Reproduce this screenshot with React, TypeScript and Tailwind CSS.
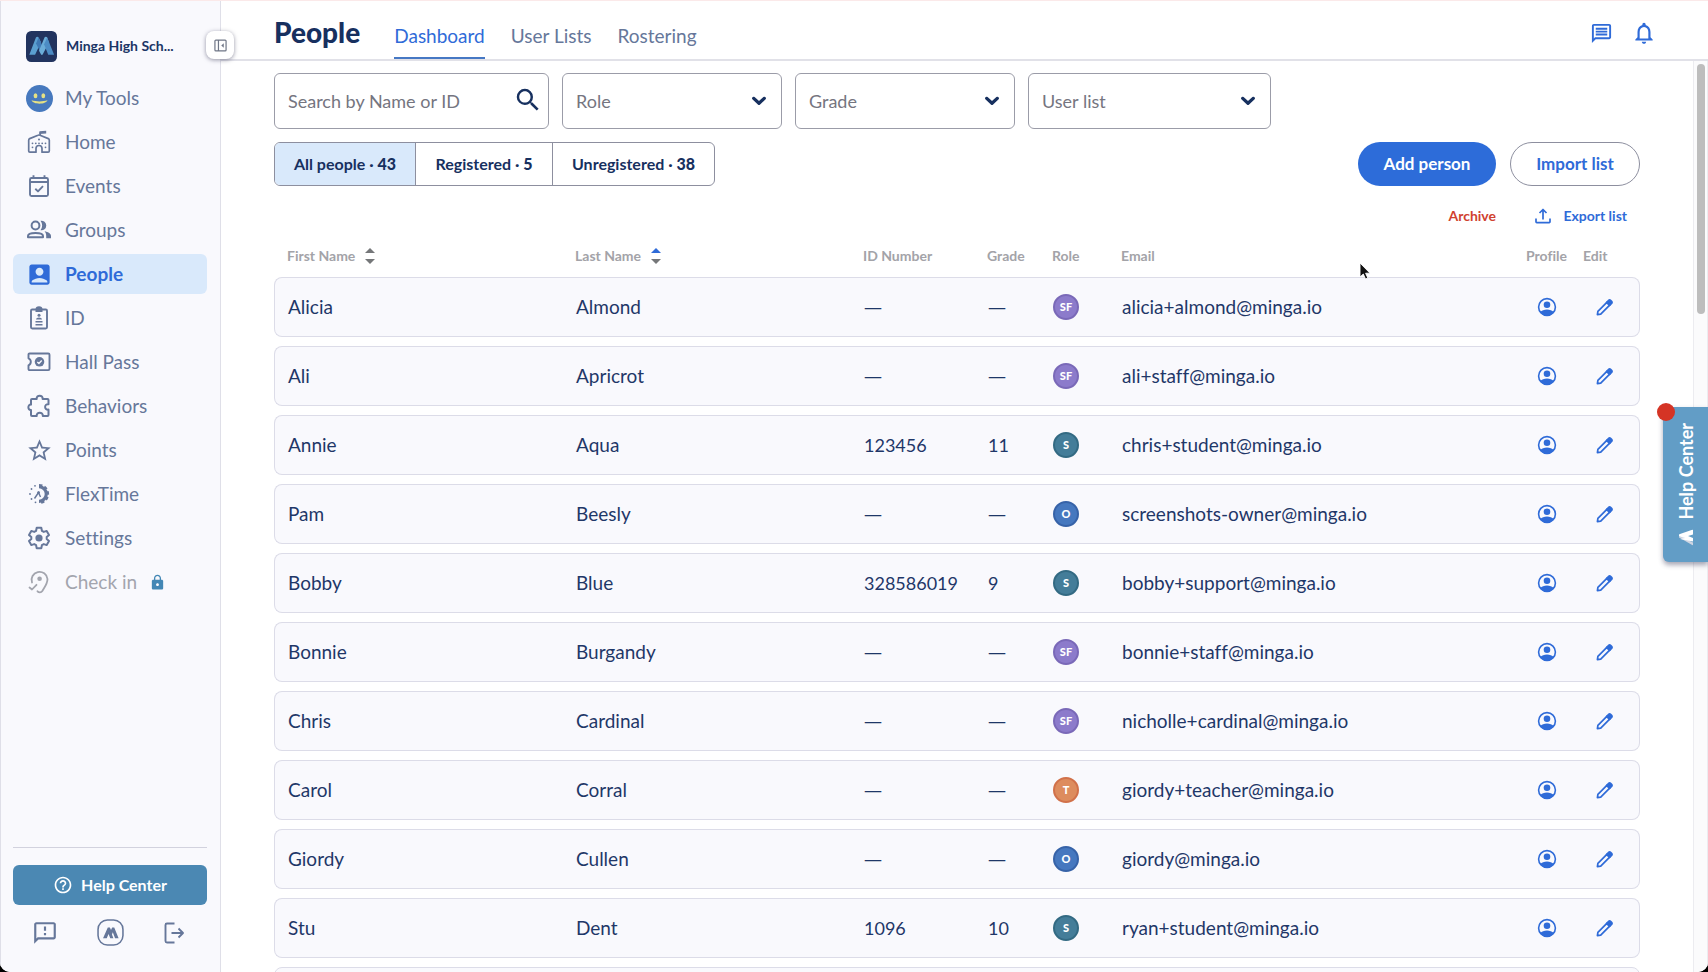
import React from 'react'
import {
  MdAccountBox,
  MdHelpOutline,
  MdLock,
  MdNotificationsNone,
  MdOutlineFeedback,
  MdOutlineMessage,
  MdSearch,
  MdStarBorder,
} from 'react-icons/md'

type RoleCode = 'SF' | 'S' | 'O' | 'T'

interface Person {
  first: string
  last: string
  id?: string
  grade?: string
  role: RoleCode
  email: string
}

const people: Person[] = [
  { first: 'Alicia', last: 'Almond', role: 'SF', email: 'alicia+almond@minga.io' },
  { first: 'Ali', last: 'Apricrot', role: 'SF', email: 'ali+staff@minga.io' },
  { first: 'Annie', last: 'Aqua', id: '123456', grade: '11', role: 'S', email: 'chris+student@minga.io' },
  { first: 'Pam', last: 'Beesly', role: 'O', email: 'screenshots-owner@minga.io' },
  { first: 'Bobby', last: 'Blue', id: '328586019', grade: '9', role: 'S', email: 'bobby+support@minga.io' },
  { first: 'Bonnie', last: 'Burgandy', role: 'SF', email: 'bonnie+staff@minga.io' },
  { first: 'Chris', last: 'Cardinal', role: 'SF', email: 'nicholle+cardinal@minga.io' },
  { first: 'Carol', last: 'Corral', role: 'T', email: 'giordy+teacher@minga.io' },
  { first: 'Giordy', last: 'Cullen', role: 'O', email: 'giordy@minga.io' },
  { first: 'Stu', last: 'Dent', id: '1096', grade: '10', role: 'S', email: 'ryan+student@minga.io' },
]

const roleColors: Record<RoleCode, string> = {
  SF: 'bg-[#8c7bcb] border-[#7a69b8]',
  S: 'bg-[#447d99] border-[#336a83]',
  O: 'bg-[#4678bf] border-[#3763a8]',
  T: 'bg-[#dd8c5e] border-[#d1714a]',
}

function SmileIcon() {
  return (
    <svg viewBox="0 0 27 27" className="size-[27px]">
      <circle cx="13.5" cy="13.5" r="13.5" fill="#4779be" />
      <ellipse cx="9.5" cy="10.8" rx="1.9" ry="2.5" fill="#e5e184" />
      <ellipse cx="17.3" cy="10.8" rx="1.9" ry="2.5" fill="#e5e184" />
      <path d="M5.500 15.300c4.500 1.500 11.500 1.500 16 0c-1.600 4.500-14.400 4.500-16 0z" fill="#e5e184" />
    </svg>
  )
}

function HomeIcon() {
  return (
    <svg viewBox="0 0 24 24" className="size-6" fill="none" stroke="currentColor" strokeWidth="1.700" strokeLinejoin="round">
      <path d="M9 22.200H2.900a1.200 1.200 0 0 1-1.200-1.200V10.200c0-.8.300-1.200 1-1.600L11 5.200a2.500 2.500 0 0 1 2 0l8.300 3.400c.7.400 1 .8 1 1.600V21a1.200 1.200 0 0 1-1.200 1.200H15v-3.700a3 3 0 0 0-6 0z" />
      <path d="M13.200 5V2.200" />
      <path d="M12.400 1.300l6.800-.6v2.800l-6.800.6z" fill="currentColor" stroke="none" />
      <g fill="currentColor" stroke="none">
        <circle cx="12" cy="9.500" r="1" />
        <circle cx="5.500" cy="13.300" r="0.900" />
        <circle cx="8.800" cy="13.300" r="0.900" />
        <circle cx="12" cy="13.300" r="0.900" />
        <circle cx="15.200" cy="13.300" r="0.900" />
        <circle cx="18.500" cy="13.300" r="0.900" />
        <circle cx="5.500" cy="17.300" r="0.900" />
        <circle cx="18.500" cy="17.300" r="0.900" />
      </g>
    </svg>
  )
}

function EventsIcon() {
  return (
    <svg viewBox="0 0 24 24" className="size-6" fill="none" stroke="currentColor" strokeWidth="1.900" strokeLinejoin="round">
      <rect x="3" y="4" width="18" height="18" rx="1.500" />
      <path d="M3 8h18" />
      <path d="M6.500 1.200V4M17.500 1.200V4" />
      <path d="M8.300 14.800l2.700 2.600 5-5.200" />
    </svg>
  )
}

function GroupsIcon() {
  return (
    <svg viewBox="0 0 26 22" className="h-[22px] w-[26px]" fill="none" stroke="currentColor" strokeWidth="2">
      <circle cx="9.500" cy="6.500" r="3.900" />
      <path d="M2 18.300v-1.200c0-4.200 15-4.200 15 0v1.200z" strokeLinejoin="round" />
      <path d="M14.500 1.800a4.800 4.800 0 1 1 0 9.400c2.200-2.800 2.200-6.600 0-9.400z" fill="currentColor" stroke="none" />
      <path d="M18.500 12.300c3.500.6 6.500 2.200 6.500 4.800v2.200h-4.800v-2.500c0-1.800-.5-3.200-1.700-4.500z" fill="currentColor" stroke="none" />
    </svg>
  )
}

function BadgeIcon() {
  return (
    <svg viewBox="0 0 24 24" className="size-6" fill="none" stroke="currentColor" strokeWidth="1.900">
      <rect x="4" y="3.500" width="16" height="19" rx="1.200" />
      <path d="M8.500 6V3.200a3.500 3 0 0 1 7 0V6z" fill="currentColor" stroke="none" />
      <circle cx="12" cy="9.300" r="1.500" fill="currentColor" stroke="none" />
      <path d="M9 13.500c0-2.700 6-2.700 6 0z" fill="currentColor" stroke="none" />
      <path d="M8.500 15.800h7M8.500 18.700h7" strokeWidth="1.400" />
    </svg>
  )
}

function PassIcon() {
  return (
    <svg viewBox="0 0 24 24" className="size-6" fill="none" stroke="currentColor" strokeWidth="1.900" strokeLinejoin="round">
      <path d="M2.500 3.500h18.700a1.300 1.300 0 0 1 1.300 1.300v14a1.300 1.300 0 0 1-1.300 1.300H2.500a1 1 0 0 1-1-1v-3.800a3.800 3.800 0 0 0 0-7V4.500a1 1 0 0 1 1-1z" />
      <circle cx="12.500" cy="11.800" r="4.800" fill="currentColor" stroke="none" />
      <path d="M10.300 12l1.600 1.500 2.800-3" stroke="#f9f9fd" strokeWidth="1.300" />
    </svg>
  )
}

function PuzzleIcon() {
  return (
    <svg viewBox="0 0 24 24" className="size-6" fill="none" stroke="currentColor" strokeWidth="2" strokeLinejoin="round">
      <path d="M5 5h4.700c-.7-4.500 6.600-4.500 5.900 0h4.900a1 1 0 0 1 1 1v4.200c-4.500-.6-4.500 6 0 5.400V21a1 1 0 0 1-1 1h-4.700c.5-4.300-6.600-4.300-6.100 0H5a1 1 0 0 1-1-1v-5c-3.500.3-3.500-5.700 0-5.400V6a1 1 0 0 1 1-1z" />
    </svg>
  )
}

function FlexTimeIcon() {
  return (
    <svg viewBox="0 0 24 24" className="size-6" fill="none" stroke="currentColor">
      <path d="M12 4.700a7.300 7.300 0 0 1 0 14.600" strokeWidth="3.200" />
      <path d="M12 2.900a9.100 9.100 0 0 1 0 18.200" strokeWidth="2" strokeDasharray="3.400 2.300" />
      <path d="M7.500 16.500l4-6 2 4.500" strokeWidth="1.400" />
      <circle cx="11.600" cy="10.600" r="1.400" fill="currentColor" stroke="none" />
      <g fill="currentColor" stroke="none">
        <circle cx="8" cy="3.800" r="0.900" />
        <circle cx="4.500" cy="7" r="0.900" />
        <circle cx="3" cy="12" r="0.900" />
        <circle cx="4.500" cy="17" r="0.900" />
        <circle cx="8.500" cy="20.300" r="0.900" />
      </g>
    </svg>
  )
}

function SettingsIcon() {
  return (
    <svg viewBox="0 0 24 24" className="size-6" fill="none" stroke="currentColor" strokeWidth="2" strokeLinejoin="round">
      <path d="M9.700 1.800h4.600l.6 3 1.900 1.100 2.900-1 2.300 4-2.300 2v2.200l2.300 2-2.300 4-2.900-1-1.900 1.100-.6 3H9.700l-.6-3-1.900-1.100-2.900 1-2.300-4 2.300-2v-2.200L2 8.900l2.300-4 2.900 1 1.900-1.100z" />
      <circle cx="12" cy="12" r="3.600" fill="currentColor" stroke="none" />
    </svg>
  )
}

function CheckInIcon() {
  return (
    <svg viewBox="0 0 24 24" className="size-6" fill="none" stroke="currentColor" strokeWidth="1.800" strokeLinecap="round" strokeLinejoin="round">
      <path d="M5 12.500A8 8 0 1 1 20.500 9c0 5-3 8.200-5.200 12-1.200 1.900-3.500 1.800-4.800.3" />
      <circle cx="12.600" cy="8.800" r="2.300" fill="currentColor" stroke="none" />
      <path d="M2.500 17.500l2.500 2 4.500-4.700" />
    </svg>
  )
}

function MingaLogo() {
  return (
    <svg viewBox="0 0 30 30" className="size-[31px] shrink-0">
      <rect width="30" height="30" rx="5" fill="#22345f" />
      <path d="M3.200 23L9.600 6.200c.4-1 2.200-1 2.600 0l2.300 4.600L8.800 23z" fill="#5b9fd0" />
      <path d="M12.200 6.200l5.500 12.300L15.300 23 9.700 12z" fill="#3f78b4" />
      <path d="M12.600 19L17.900 6.200c.4-1 2.200-1 2.600 0l1.700 5L16 23h-1.300z" fill="#6badd8" />
      <path d="M20.500 6.200L27.200 23h-5.700L17.500 12.800z" fill="#4c8cc4" />
    </svg>
  )
}

function MingaMark() {
  return (
    <svg viewBox="0 0 26 26" className="size-[27px]" fill="none" stroke="currentColor">
      <rect x="1" y="1" width="24" height="24" rx="9" strokeWidth="1.500" />
      <path d="M5.800 18.500l4.600-10.300h2l1.100 2.500 1.100-2.500h2l4.200 10.300h-3.400l-2.200-5.800-.8 2.300 1.400 3.500h-3l-1.700-4-1.700 4z" fill="currentColor" stroke="none" />
    </svg>
  )
}

function LogoutIcon() {
  return (
    <svg viewBox="0 0 24 24" className="size-6" fill="none" stroke="currentColor" strokeWidth="1.900" strokeLinejoin="round">
      <path d="M11.500 2.500H4A1.500 1.500 0 0 0 2.500 4v16A1.500 1.500 0 0 0 4 21.500h7.500" />
      <path d="M8.500 12H20M15.500 7.500L20 12l-4.500 4.500" />
    </svg>
  )
}

function CollapseIcon() {
  return (
    <svg viewBox="0 0 14 14" className="size-[13px]" fill="none" stroke="#6f7686" strokeWidth="1.300">
      <rect x="1" y="1.200" width="12" height="11.600" rx="1" />
      <path d="M4.800 1.200v11.600" />
      <path d="M10.500 4.500v5L7.800 7z" fill="#6f7686" stroke="none" />
    </svg>
  )
}

function Chevron() {
  return (
    <svg viewBox="0 0 16 10" className="pointer-events-none absolute right-4 top-1/2 h-[9px] w-[14px] -translate-y-1/2" fill="none" stroke="#17305f" strokeWidth="3.800" strokeLinecap="round" strokeLinejoin="round">
      <path d="M2 2l6 5.500L14 2" />
    </svg>
  )
}

function ExportIcon() {
  return (
    <svg viewBox="0 0 16 16" className="size-4" fill="none" stroke="currentColor" strokeWidth="1.700" strokeLinejoin="round">
      <path d="M1 10.500v3.300a.8.8 0 0 0 .8.8h12.400a.8.8 0 0 0 .8-.8v-3.300" />
      <path d="M8 11.500V1.800M4.500 5L8 1.500 11.500 5" />
    </svg>
  )
}

function ProfileIcon() {
  return (
    <svg viewBox="0 0 20 20" className="size-5" fill="currentColor">
      <circle cx="10" cy="10" r="8.400" fill="none" stroke="currentColor" strokeWidth="1.600" />
      <circle cx="10" cy="7.700" r="3.300" />
      <path d="M3.300 15c2.700-3.400 10.700-3.400 13.400 0-2.700 5-10.700 5-13.400 0z" />
    </svg>
  )
}

function PencilIcon() {
  return (
    <svg viewBox="0 0 18 18" className="size-[17px]" fill="none" stroke="currentColor" strokeWidth="1.800" strokeLinejoin="round">
      <path d="M1.500 16.500l.5-3.400L12 3l3 3L5 16z" />
      <path d="M11.200 3.700l2.200-2.200c.7-.7 1.300-.7 2 0l1.100 1.100c.7.7.7 1.300 0 2l-2.200 2.200z" fill="currentColor" />
    </svg>
  )
}

function SortIcon({ ascending = false }: { ascending?: boolean }) {
  return (
    <svg viewBox="0 0 10 16" className="h-4 w-[10px]">
      <path d="M0 5l5-5 5 5z" fill={ascending ? '#2f6bd8' : '#757779'} />
      <path d="M0 11l5 5 5-5z" fill="#757779" />
    </svg>
  )
}

const navItems = [
  { label: 'My Tools', icon: <SmileIcon /> },
  { label: 'Home', icon: <HomeIcon /> },
  { label: 'Events', icon: <EventsIcon /> },
  { label: 'Groups', icon: <GroupsIcon /> },
  { label: 'People', icon: <MdAccountBox className="size-[27px]" />, active: true },
  { label: 'ID', icon: <BadgeIcon /> },
  { label: 'Hall Pass', icon: <PassIcon /> },
  { label: 'Behaviors', icon: <PuzzleIcon /> },
  { label: 'Points', icon: <MdStarBorder className="size-[27px]" /> },
  { label: 'FlexTime', icon: <FlexTimeIcon /> },
  { label: 'Settings', icon: <SettingsIcon /> },
  { label: 'Check in', icon: <CheckInIcon />, locked: true },
]

function Sidebar() {
  return (
    <aside className="relative flex w-[221px] shrink-0 flex-col border-x border-[#dfdfe8] bg-[#f9f9fd] pl-3 pr-[13px] text-[#66779a]">
      <div className="mt-[29px] flex h-8 items-center gap-[9px] pl-[13px]">
        <MingaLogo />
        <span className="text-sm font-bold text-[#1b3566]">Minga High Sch...</span>
      </div>

      <nav className="mt-4 flex flex-col gap-1">
        {navItems.map((item) => (
          <a
            key={item.label}
            href="#"
            className={`flex h-10 items-center rounded-md pl-3 text-[19px] ${
              item.active ? 'bg-[#d9e9fb] font-bold text-[#2f6bd8]' : item.locked ? 'text-[#a3a5ae]' : ''
            }`}
          >
            <span className="mr-3 flex w-[28px] justify-center">{item.icon}</span>
            {item.label}
            {item.locked && <MdLock className="ml-3 size-[17px] text-[#4387b5]" />}
          </a>
        ))}
      </nav>

      <div className="mt-auto border-t border-[#d2d2de] pt-[17px]">
        <button className="flex h-10 w-full items-center justify-center gap-2 rounded-md bg-[#4b88b3] font-bold text-white">
          <MdHelpOutline className="size-5" />
          Help Center
        </button>
        <div className="mb-[26px] mt-[14px] flex items-center justify-between pl-[19px] pr-5">
          <button aria-label="Feedback"><MdOutlineFeedback className="size-[26px]" /></button>
          <button aria-label="Minga"><MingaMark /></button>
          <button aria-label="Log out"><LogoutIcon /></button>
        </div>
      </div>

      <button
        aria-label="Collapse sidebar"
        className="absolute -right-[14px] top-[30px] z-10 flex size-7 items-center justify-center rounded-lg bg-white shadow-[0_1px_4px_rgba(60,60,90,0.55)]"
      >
        <CollapseIcon />
      </button>
    </aside>
  )
}

function Header() {
  return (
    <header className="flex h-[60px] shrink-0 items-stretch border-b-2 border-[#e1e1e8] pl-[53px] pr-[51px]">
      <h1 className="mr-[34px] self-center pt-[3px] text-[28px] font-black leading-8 text-[#17305f]">People</h1>
      <nav className="flex gap-[26px] text-[19px] text-[#66779a]">
        <a href="#" className="border-b-2 border-[#4678c4] pt-[21px] text-[#2f6bd8]">Dashboard</a>
        <a href="#" className="pt-[21px]">User Lists</a>
        <a href="#" className="pt-[21px]">Rostering</a>
      </nav>
      <div className="ml-auto flex items-center gap-[18px] pt-[6px] text-[#2f6bd8]">
        <button aria-label="Messages"><MdOutlineMessage className="size-[23px]" /></button>
        <button aria-label="Notifications"><MdNotificationsNone className="size-[26px]" /></button>
      </div>
    </header>
  )
}

function FilterSelect({ label, className }: { label: string; className: string }) {
  return (
    <div className={`relative ${className}`}>
      <select
        aria-label={label}
        className="h-14 w-full appearance-none rounded-md border border-[#9b9ca8] bg-white pl-[13px] pr-10 text-lg text-[#757580]"
      >
        <option>{label}</option>
      </select>
      <Chevron />
    </div>
  )
}

function Filters() {
  return (
    <div className="flex gap-[13px]">
      <div className="relative w-[275px]">
        <input
          type="search"
          aria-label="Search by Name or ID"
          placeholder="Search by Name or ID"
          className="h-14 w-full rounded-md border border-[#9b9ca8] bg-white pl-[13px] pr-11 text-lg placeholder:text-[#757580]"
        />
        <MdSearch className="absolute right-1.5 top-3 size-[30px] text-[#17305f]" />
      </div>
      <FilterSelect label="Role" className="w-[220px]" />
      <FilterSelect label="Grade" className="w-[220px]" />
      <FilterSelect label="User list" className="w-[243px]" />
    </div>
  )
}

function Toolbar() {
  return (
    <div className="mt-[13px] flex items-start justify-between">
      <div className="flex h-11 overflow-hidden rounded-md border border-[#8d8f9f] text-base font-bold text-[#17305f]">
        <button className="w-[140px] bg-[#d9e9fb]">All people · <b className="font-black">43</b></button>
        <button className="w-[138px] border-x border-[#8d8f9f]">Registered · <b className="font-black">5</b></button>
        <button className="w-[161px]">Unregistered · <b className="font-black">38</b></button>
      </div>
      <div className="flex gap-[14px] font-bold">
        <div className="flex flex-col items-end">
          <button className="h-11 w-[138px] rounded-full bg-[#2d6cd9] text-[17px] text-white">Add person</button>
          <button className="mt-5 text-sm text-[#d0412f]">Archive</button>
        </div>
        <div className="flex flex-col items-end text-[#2f6bd8]">
          <button className="h-11 w-[130px] rounded-full border border-[#8d8f9f] text-[17px]">Import list</button>
          <button className="mr-[13px] mt-5 flex items-center gap-3 text-sm">
            <ExportIcon />
            Export list
          </button>
        </div>
      </div>
    </div>
  )
}

function Dash() {
  return <span className="font-['Open_Sans']">—</span>
}

function PeopleTable() {
  return (
    <table className="mt-[9px] w-full table-fixed border-separate border-spacing-x-0 border-spacing-y-[9px] text-left text-[19px] text-[#1f3768]">
      <colgroup>
        <col className="w-[288px]" />
        <col className="w-[288px]" />
        <col className="w-[124px]" />
        <col className="w-[65px]" />
        <col className="w-[69px]" />
        <col />
        <col className="w-[57px]" />
        <col className="w-[70px]" />
      </colgroup>
      <thead>
        <tr className="text-sm leading-6 text-[#a3a3a8] [&>th]:h-6 [&>th]:p-0 [&>th]:pl-[13px]">
          <th aria-sort="none">
            <button className="flex items-center gap-[10px]">First Name <SortIcon /></button>
          </th>
          <th aria-sort="ascending">
            <button className="flex items-center gap-[10px]">Last Name <SortIcon ascending /></button>
          </th>
          <th>ID Number</th>
          <th>Grade</th>
          <th>Role</th>
          <th>Email</th>
          <th>Profile</th>
          <th>Edit</th>
        </tr>
      </thead>
      <tbody>
        {people.map((person) => (
          <tr
            key={person.email}
            className="[&>td]:h-[60px] [&>td]:border-y [&>td]:border-[#dcdce8] [&>td]:bg-[#f9f9fd] [&>td]:p-0 [&>td]:pl-[14px] [&>td:first-child]:pl-[13px]"
          >
            <td className="rounded-l-lg border-l">{person.first}</td>
            <td>{person.last}</td>
            <td className="text-lg">{person.id ?? <Dash />}</td>
            <td className="text-lg">{person.grade ?? <Dash />}</td>
            <td>
              <span className={`flex size-[26px] items-center justify-center rounded-full border-2 text-[11px] font-black text-white ${roleColors[person.role]}`}>
                {person.role}
              </span>
            </td>
            <td>{person.email}</td>
            <td>
              <button aria-label={`View ${person.first} ${person.last}`} className="ml-2.5 block text-[#2f6bd8]">
                <ProfileIcon />
              </button>
            </td>
            <td className="rounded-r-lg border-r">
              <button aria-label={`Edit ${person.first} ${person.last}`} className="ml-3 block text-[#2f6bd8]">
                <PencilIcon />
              </button>
            </td>
          </tr>
        ))}
        {/* Next row, cut off by the bottom of the window */}
        <tr className="[&>td]:h-[60px]">
          <td colSpan={8} className="rounded-lg border border-[#dcdce8] bg-[#f9f9fd]" />
        </tr>
      </tbody>
    </table>
  )
}

function HelpTab() {
  return (
    <div className="absolute right-0 top-[406px] z-20">
      <button className="flex h-[155px] w-[45px] items-center justify-center rounded-l-md bg-[#629dc6] text-lg font-bold text-white shadow-[0_3px_5px_rgba(60,60,90,0.45)]">
        <span className="flex rotate-180 items-center gap-2.5 [writing-mode:vertical-rl]">
          {/* Drawn upside down, the label is rotated as a whole */}
          <svg viewBox="0 0 14 16" className="h-4 w-[14px]">
            <path d="M0 6l13 3.500a1 1 0 0 0 0-2L0 0v3l4 2z" fill="#ced5e2" />
            <path d="M0 16l13-4.500a1 1 0 0 0 0-2.300L8 7.500l5-.8L0 4v3.500l5 2L0 11z" fill="#fff" />
          </svg>
          Help Center
        </span>
      </button>
      <span className="absolute -left-[6px] -top-[4px] size-[18px] rounded-full bg-[#d53425]" />
    </div>
  )
}

function Cursor() {
  return (
    <svg viewBox="0 0 12 18" className="absolute left-[1359px] top-[261px] z-20 h-[18px] w-3">
      <path d="M1 1v14l3.300-3 2.200 5 2.300-1-2.200-4.800H11z" fill="#111" stroke="#fff" strokeWidth="0.900" />
    </svg>
  )
}

export default function App() {
  return (
    <div className="bg-black font-['Lato','Open_Sans',sans-serif] [font-variant-ligatures:none]">
      <div className="relative flex h-screen overflow-hidden rounded-b-[10px] border-t border-[#fbe9e9] bg-white">
        <Sidebar />
        <div className="flex min-w-0 flex-1 flex-col">
          <Header />
          <div className="flex min-h-0 flex-1">
            <main className="min-w-0 flex-1 overflow-hidden px-[53px] pt-3">
              <Filters />
              <Toolbar />
              <PeopleTable />
            </main>
            <div className="flex w-[15px] shrink-0 justify-center border-x border-[#ececf0] bg-[#fbfbfc] pt-[3px]">
              <div className="h-[250px] w-2 rounded-full bg-[#bdbdbd]" />
            </div>
          </div>
        </div>
        <HelpTab />
        <Cursor />
      </div>
    </div>
  )
}
